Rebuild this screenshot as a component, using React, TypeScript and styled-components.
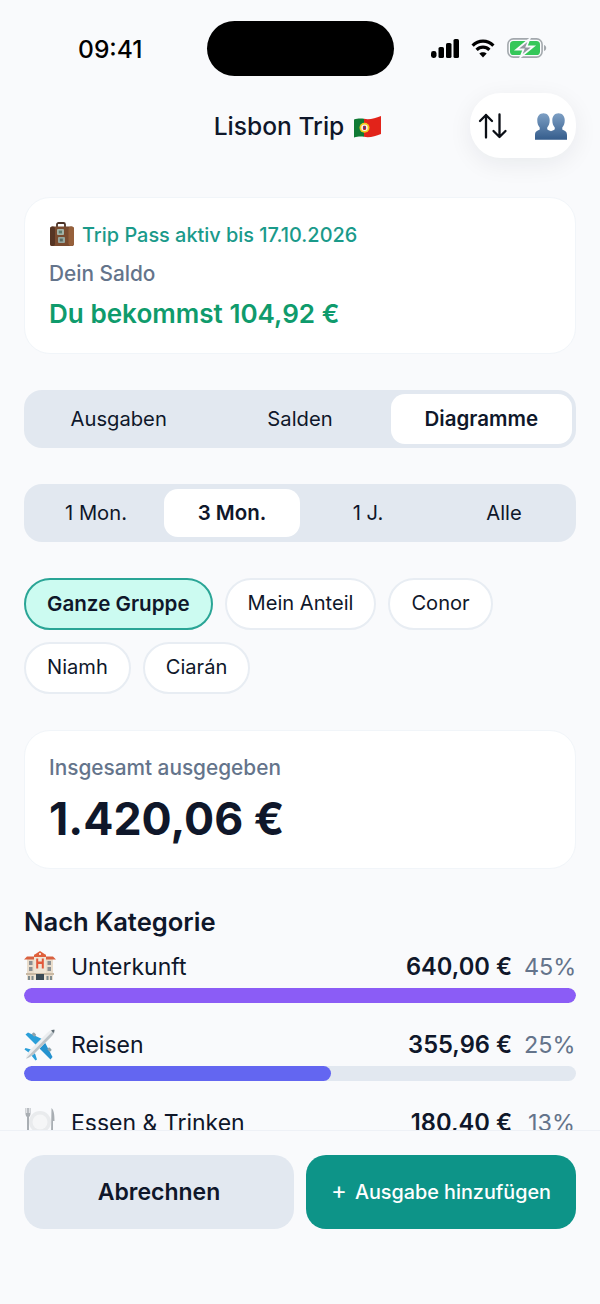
import React from "react";
import styled, { createGlobalStyle } from "styled-components";

const Global = createGlobalStyle`
  html, body { margin: 0; padding: 0; background: #f8fafc; }
  body { font-family: Inter, "Liberation Sans", sans-serif; color: #0f172a; -webkit-font-smoothing: antialiased; }
  * { box-sizing: border-box; }
`;

const Page = styled.div`
  width: 600px; height: 1304px; display: flex; flex-direction: column; background: #f9fafc; overflow: hidden;
`;
const Status = styled.div`
  height: 92px; flex: none; padding: 21px 54px 0 78px; display: grid; grid-template-columns: 129px 187px 1fr; align-items: start;
`;
const Time = styled.div`
  font-size: 24.6px; font-weight: 550; color: #000; line-height: 56px;
`;
const Island = styled.div`
  width: 187px; height: 55px; border-radius: 28px; background: #000;
`;
const StatusIcons = styled.div`
  display: flex; align-items: center; height: 56px; padding-left: 37px; gap: 11px; margin-top: -1px;
`;
const Header = styled.header`
  height: 67px; flex: none; position: relative; display: flex; align-items: center; justify-content: center; padding: 2px 4px 0 0;
`;
const Title = styled.h1`
  margin: 0; font-size: 24.6px; font-weight: 550; color: #0f172a; display: flex; align-items: center; gap: 9px; line-height: 1;
`;
const HeaderPill = styled.div`
  position: absolute; left: 470px; top: 1px; width: 106px; height: 65px; border-radius: 31px; background: #fff;
  box-shadow: 0 6px 24px rgba(15,23,42,.07); display: flex; align-items: center; justify-content: space-between; padding: 0 9px 0 8px;
`;
const Scroll = styled.main`
  flex: 1; min-height: 0; overflow: hidden; padding: 38px 24px 0; display: flex; flex-direction: column;
`;
const Card = styled.section`
  background: #fff; border: 1px solid #f1f5f9; border-radius: 26px; padding: 24px; display: flex; flex-direction: column;
`;
const BalanceCard = styled(Card)`
  height: 157px; margin-bottom: 36px;
`;
const Pass = styled.div`
  display: flex; align-items: center; gap: 7px; font-size: 19.9px; font-weight: 500; color: #1a9a8a; line-height: 26px;
`;
const Muted = styled.div`
  font-size: 20.8px; font-weight: 500; color: #64748b; line-height: 26px;
`;
const BalanceLabel = styled(Muted)`
  margin-top: 13px;
`;
const Balance = styled.div`
  font-size: 26.1px; font-weight: 600; color: #0f9b6c; line-height: 32px; margin-top: 11px;
`;
const Segmented = styled.div<{ $cols: number; $pad: string }>`
  height: 58px; flex: none; background: #e2e8f0; border-radius: 18px; padding: ${p => p.$pad}; margin-bottom: 36px;
  display: grid; grid-template-columns: repeat(${p => p.$cols}, 1fr);
`;
const Seg = styled.div<{ $active?: boolean }>`
  display: flex; align-items: center; justify-content: center; color: #0f172a; border-radius: 14px; padding-bottom: 2px;
  font-size: ${p => (p.$active ? "20.5px" : "20.2px")};
  font-weight: ${p => (p.$active ? 600 : 400)}; background: ${p => (p.$active ? "#fff" : "transparent")};
`;
const Chips = styled.div`
  display: flex; flex-wrap: wrap; gap: 12px; margin-bottom: 36px; width: 500px;
`;
const Chip = styled.div<{ $active?: boolean }>`
  height: 52px; border-radius: 26px; display: flex; align-items: center; color: #0f172a; padding-bottom: 2px;
  padding-left: ${p => (p.$active ? "21px" : "21px")}; padding-right: ${p => (p.$active ? "21px" : "21px")};
  font-size: ${p => (p.$active ? "20.6px" : "20.1px")};
  font-weight: ${p => (p.$active ? 600 : 400)};
  background: ${p => (p.$active ? "#ccfbf1" : "#fff")};
  border: 2px solid ${p => (p.$active ? "#2aa596" : "#e8edf3")};
`;
const TotalCard = styled(Card)`
  height: 139px; margin-bottom: 36px;
`;
const Total = styled.div`
  font-size: 44.7px; font-weight: 700; color: #0f172a; line-height: 56px; margin-top: 10px;
`;
const SectionTitle = styled.h2`
  margin: 0 0 8px; font-size: 25.6px; font-weight: 600; color: #0f172a; line-height: 34px;
`;
const Category = styled.div`
  display: flex; flex-direction: column; margin-bottom: 22px; flex: none;
`;
const CatRow = styled.div`
  display: flex; align-items: center; height: 38px; margin-bottom: 3px;
`;
const CatIcon = styled.span`
  width: 47px; flex: none; display: flex;
`;
const CatName = styled.span`
  flex: 1; font-size: 23px; color: #0f172a; padding-top: 2px;
`;
const CatValue = styled.span`
  font-size: 23.7px; font-weight: 600; color: #0f172a;
`;
const CatPct = styled.span`
  font-size: 23.4px; color: #64748b; margin-left: 12px; width: 52px; text-align: right; padding-right: 1px;
`;
const Track = styled.div`
  height: 15px; border-radius: 8px; background: #e2e8f0; overflow: hidden;
`;
const Fill = styled.div<{ $color: string }>`
  height: 100%; border-radius: 8px; background: ${p => p.$color};
`;
const Footer = styled.footer`
  height: 174px; flex: none; background: #f9fafc; border-top: 1px solid #eef1f6; padding: 24px 24px 0;
  display: grid; grid-template-columns: 1fr 1fr; gap: 12px; align-items: start;
`;
const Btn = styled.div<{ $primary?: boolean }>`
  height: 74px; border-radius: 20px; display: flex; align-items: center; justify-content: center;
  background: ${p => (p.$primary ? "#0d9488" : "#e2e8f0")};
  color: ${p => (p.$primary ? "#fff" : "#0f172a")};
  font-size: ${p => (p.$primary ? "19.8px" : "23px")}; font-weight: ${p => (p.$primary ? 550 : 600)};
  gap: ${p => (p.$primary ? "8px" : "0")};
`;
const Plus = styled.span`
  font-size: 24px; font-weight: 400; line-height: 1; margin-top: -2px;
`;

const Signal = () => (
  <svg width="29" height="19" viewBox="0 0 29 19"><g fill="#000">
    <rect x="0" y="12" width="5.5" height="7" rx="2.4"/><rect x="7.5" y="8" width="5.5" height="11" rx="1.6"/>
    <rect x="15" y="4" width="5.5" height="15" rx="1.6"/><rect x="22.5" y="0" width="5.5" height="19" rx="1.6"/></g></svg>
);
const Wifi = () => (
  <svg width="24" height="19" viewBox="0 0 24 19" fill="none" stroke="#000" strokeWidth="3.2">
    <path d="M1.6 6.600 C7.500 .6 16.500 .6 22.400 6.600"/><path d="M5.600 10.800 C9.200 7.200 14.800 7.200 18.400 10.800"/>
    <path d="M12 18.600 L8.300 14.600 C10.400 12.700 13.600 12.700 15.700 14.600 Z" fill="#000" stroke="none"/></svg>
);
const Battery = () => (
  <svg width="40" height="20" viewBox="0 0 40 20" style={{ marginLeft: 1 }}>
    <rect x=".9" y=".9" width="34.2" height="18.2" rx="5.5" fill="none" stroke="#a3a8ad" strokeWidth="1.6"/>
    <rect x="3" y="3" width="30" height="14" rx="3.6" fill="#35c759"/>
    <path d="M37 7 C38.6 7.5 39.2 8.6 39.2 10 C39.2 11.4 38.6 12.5 37 13 Z" fill="#a3a8ad"/>
    <path d="M22.5 1 L9.500 11.500 H16.500 L13.500 19 L26.500 8.500 H19.500 Z" fill="#9498a0" stroke="#f8fafc" strokeWidth="1.800"/></svg>
);
const Swap = () => (
  <svg width="30" height="26" viewBox="0 0 30 26" fill="none" stroke="#0b0f16" strokeWidth="2.3" strokeLinecap="round" strokeLinejoin="round">
    <path d="M8 24.500V2M2 8L8 2l6 6"/><path d="M21.500 1.500V24M15.500 18l6 6 6-6"/></svg>
);
const Busts = () => (
  <svg width="32" height="27" viewBox="0 0 34 28" style={{ marginTop: 2 }}>
    <defs><linearGradient id="bu" x1="0" y1="0" x2="0" y2="1"><stop offset="0" stopColor="#7d9fc4"/><stop offset="1" stopColor="#355d8c"/></linearGradient></defs>
    <path fill="url(#bu)" d="M9 0c4 0 6.600 3 6.600 7.400 0 3.200-1 6-2.600 7.600v2c1.200 1 3 1.700 4 2 1-.3 2.800-1 4-2v-2c-1.600-1.600-2.600-4.400-2.600-7.600C18.400 3 21 0 25 0s6.600 3 6.600 7.400c0 3.200-1 6-2.600 7.600v2.200c2 1.200 5 1.600 5 5.800V28H0v-5c0-4.200 3-4.600 5-5.800V15C3.400 13.400 2.400 10.600 2.400 7.400 2.400 3 5 0 9 0z"/></svg>
);
const Flag = () => (
  <svg width="29" height="24" viewBox="0 0 29 24">
    <path d="M1 4.500 C5 3 8.500 3.300 11 3.800 V21.800 C8 21.200 5 21.300 1 22.500Z" fill="#0f7a34"/>
    <path d="M11 3.800 C17 5 22 3 28 1 V19 C22 21 17 23 11 21.800Z" fill="#e2231a"/>
    <circle cx="11.500" cy="12.700" r="5" fill="#f4c91f"/><circle cx="11.500" cy="12.700" r="3.200" fill="#f6f6f6"/>
    <rect x="9.900" y="10.700" width="3.200" height="4.200" rx="1.200" fill="#c8202a"/><rect x="10.800" y="11.500" width="1.400" height="2.400" fill="#1d4fa0"/>
  </svg>
);
const Suitcase = () => (
  <svg width="26" height="26" viewBox="0 0 26 26">
    <path d="M8 5V2.500C8 1.500 8.800 1 9.500 1h5C15.200 1 16 1.500 16 2.500V5" fill="none" stroke="#4a3226" strokeWidth="1.800"/>
    <rect x="1" y="4.500" width="24" height="19.500" rx="2.600" fill="#7a4b2f"/>
    <rect x="1" y="4.500" width="5" height="19.500" rx="2.200" fill="#563524"/>
    <rect x="19.500" y="4.500" width="5.500" height="19.500" rx="2.400" fill="#96603b"/>
    <rect x="8" y="7" width="7" height="6" rx="1" fill="#a3b3a8"/><rect x="9.800" y="8.600" width="3.200" height="2.800" fill="#5d7a6c"/>
    <rect x="9" y="15" width="7" height="6" rx="1" fill="#96a69e"/><rect x="10.800" y="16.600" width="3" height="2.800" fill="#566860"/>
  </svg>
);
const Hotel = () => (
  <svg width="32" height="30" viewBox="0 0 32 30">
    <rect x="3" y="8" width="26" height="21" fill="#e9dccb"/>
    <path d="M0 8.500 L3 5.500 H11 L11 8.500Z M32 8.500 L29 5.500 H21 L21 8.500Z" fill="#d9603f"/>
    <rect x="10" y="3" width="12" height="26" fill="#efe5d6"/>
    <path d="M10 4 L16 0 L22 4 V6 H10Z" fill="#e0603c"/><circle cx="16" cy="3" r="1" fill="#fff"/>
    <path d="M12.200 7.500h2v3h3.600v-3h2v10h-2v-4.500h-3.600v4.500h-2z" fill="#e2583a"/>
    <g fill="#8c8f92"><rect x="5" y="10" width="3.500" height="4"/><rect x="23.500" y="10" width="3.500" height="4"/><rect x="5" y="16" width="3.500" height="4"/><rect x="23.500" y="16" width="3.500" height="4"/></g>
    <rect x="2" y="22" width="28" height="2" fill="#c9b9a4"/>
    <rect x="12" y="23" width="8" height="6" fill="#3b4a55"/>
    <g fill="#7f8b8e"><rect x="4" y="25" width="2" height="4"/><rect x="7.500" y="25" width="2" height="4"/><rect x="22.500" y="25" width="2" height="4"/><rect x="26" y="25" width="2" height="4"/></g>
  </svg>
);
const Plane = () => (
  <svg width="32" height="33" viewBox="0 0 32 33">
    <path d="M18 11 L4 4.500 L1.500 6.500 L12 17Z" fill="#2b9fd9"/>
    <path d="M21 14.500 L28.500 29 L26.500 31.500 L15.500 20.500Z" fill="#2592cf"/>
    <path d="M9 22 L1.500 20 L0.500 21.500 L6 25.500Z M10.500 24 L13 31.500 L11.500 32.500 L7 27Z" fill="#2b9fd9"/>
    <rect x="8.500" y="4.500" width="3" height="4" rx="1" fill="#8fa3ad" transform="rotate(-45 10 6.500)"/>
    <rect x="24" y="19.500" width="3" height="4" rx="1" fill="#8fa3ad" transform="rotate(-45 25.500 21.500)"/>
    <path d="M30.500 1.500 C31.500 2.500 30 6 27 9 L10 26 C7 28.500 3.500 30.500 2 30.500 C2 29 3.500 25 6 22 L23 5 C26 2 29.500 .5 30.500 1.500Z" fill="#eceef0"/>
    <path d="M30.500 1.500 C31.500 2.500 30 6 27 9 L10 26 C7 28.500 3.500 30.500 2 30.500Z" fill="#bcc3c8"/>
    <path d="M27 2.500 L29.500 5 C30 4 30.500 2.500 30.200 1.800 C29.500 1.500 28 2 27 2.500Z" fill="#5d6a72"/>
  </svg>
);
const Plate = () => (
  <svg width="32" height="30" viewBox="0 0 32 30">
    <circle cx="16" cy="15" r="11" fill="#e9ebed"/><circle cx="16" cy="15" r="7.500" fill="#f5f6f7"/>
    <path d="M1.500 1v5.500C1.500 8.500 2.300 9.500 3 10v18h2V10c.7-.5 1.500-1.500 1.500-3.500V1H5.700v5H4.800V1H3.200v5H2.300V1z" fill="#a9aeb3"/>
    <path d="M27.500 1C30 3 30.500 8 30.500 14h-1.500v14h-2z" fill="#a9aeb3"/>
  </svg>
);

export default function App() {
  return (
    <Page>
      <Global />
      <Status>
        <Time>09:41</Time>
        <Island />
        <StatusIcons><Signal /><Wifi /><Battery /></StatusIcons>
      </Status>
      <Header>
        <Title>Lisbon Trip <Flag /></Title>
        <HeaderPill><Swap /><Busts /></HeaderPill>
      </Header>
      <Scroll>
        <BalanceCard>
          <Pass><Suitcase />Trip Pass aktiv bis 17.10.2026</Pass>
          <BalanceLabel>Dein Saldo</BalanceLabel>
          <Balance>Du bekommst 104,92 €</Balance>
        </BalanceCard>
        <Segmented $cols={3} $pad="4px">
          <Seg>Ausgaben</Seg>
          <Seg>Salden</Seg>
          <Seg $active>Diagramme</Seg>
        </Segmented>
        <Segmented $cols={4} $pad="5px 4px">
          <Seg>1 Mon.</Seg>
          <Seg $active>3 Mon.</Seg>
          <Seg>1 J.</Seg>
          <Seg>Alle</Seg>
        </Segmented>
        <Chips>
          <Chip $active>Ganze Gruppe</Chip>
          <Chip>Mein Anteil</Chip>
          <Chip>Conor</Chip>
          <Chip>Niamh</Chip>
          <Chip>Ciarán</Chip>
        </Chips>
        <TotalCard>
          <Muted>Insgesamt ausgegeben</Muted>
          <Total>1.420,06 €</Total>
        </TotalCard>
        <SectionTitle>Nach Kategorie</SectionTitle>
        <Category>
          <CatRow><CatIcon><Hotel /></CatIcon><CatName>Unterkunft</CatName><CatValue>640,00 €</CatValue><CatPct>45%</CatPct></CatRow>
          <Track><Fill $color="#8b5cf6" style={{ width: "100%" }} /></Track>
        </Category>
        <Category>
          <CatRow><CatIcon><Plane /></CatIcon><CatName>Reisen</CatName><CatValue>355,96 €</CatValue><CatPct>25%</CatPct></CatRow>
          <Track><Fill $color="#6366f1" style={{ width: "55.6%" }} /></Track>
        </Category>
        <Category>
          <CatRow><CatIcon><Plate /></CatIcon><CatName>Essen &amp; Trinken</CatName><CatValue>180,40 €</CatValue><CatPct>13%</CatPct></CatRow>
        </Category>
      </Scroll>
      <Footer>
        <Btn>Abrechnen</Btn>
        <Btn $primary><Plus>+</Plus><span>Ausgabe hinzufügen</span></Btn>
      </Footer>
    </Page>
  );
}
